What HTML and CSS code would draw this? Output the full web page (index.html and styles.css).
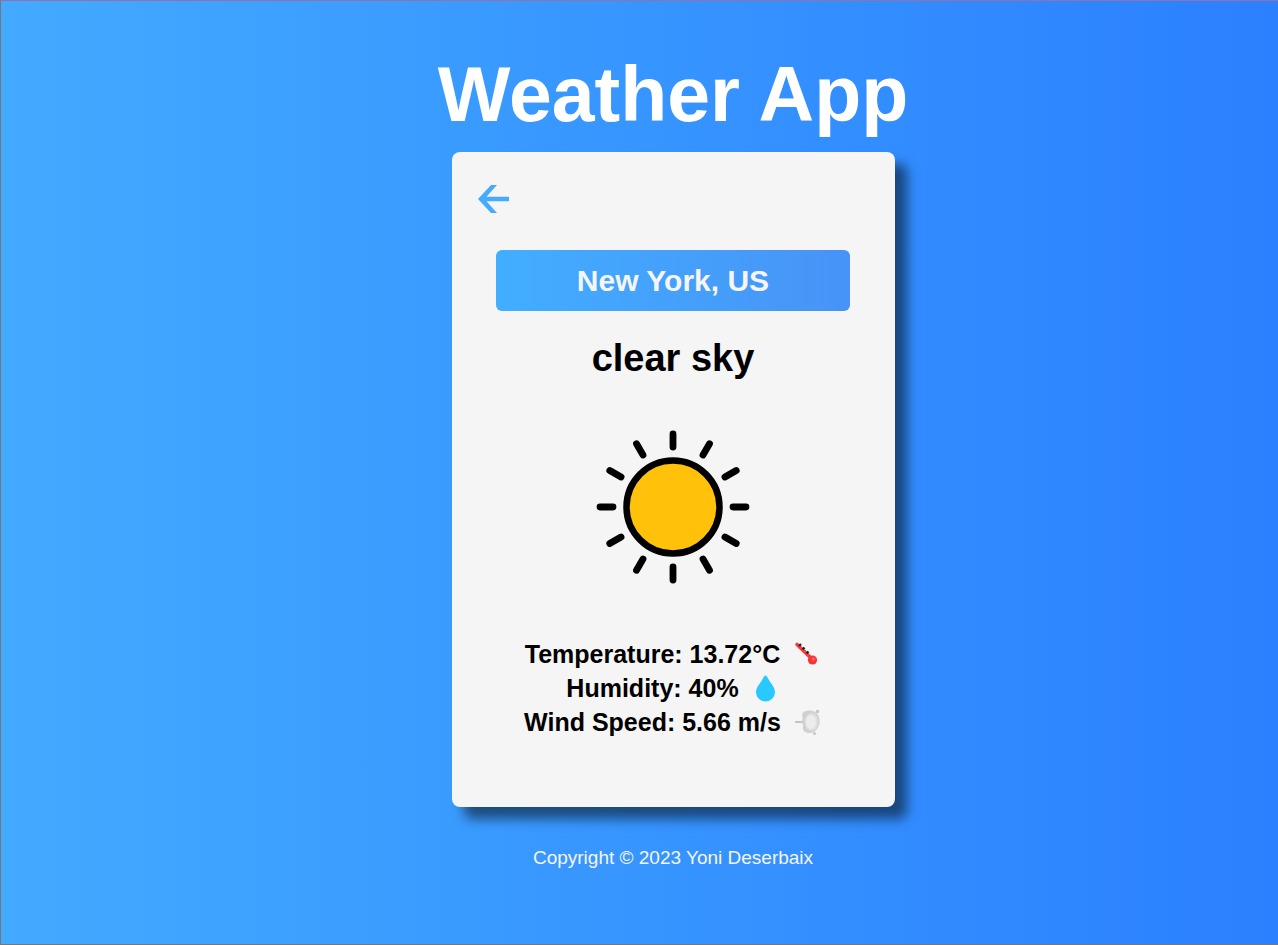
FILE: index.html
```html
<!DOCTYPE html>
<html lang="en">
<head>
<meta charset="utf-8">
<meta name="viewport" content="width=device-width, initial-scale=1">
<title>Weather App</title>
<link rel="stylesheet" href="styles.css">
</head>
<body>
<div class="app">
  <h1 class="title">Weather App</h1>
  <main class="card">
    <button class="back" type="button" aria-label="Back">
      <svg width="32" height="28" viewBox="0 0 32 28" aria-hidden="true"><path d="M0 14 13 0h6L8.500 11.700H31v4.600H8.500L19 28h-6z" fill="#45abff"/></svg>
    </button>
    <h2 class="city">New York, US</h2>
    <p class="condition">clear sky</p>
    <svg class="sun" viewBox="-80 -80 160 160" role="img" aria-label="Sun">
      <circle r="46.500" fill="#ffc10a" stroke="#000" stroke-width="6.500"/>
      <g stroke="#000" stroke-width="6.800" stroke-linecap="round">
        <path id="ray" d="M0-60V-73"/>
        <use href="#ray" transform="rotate(30)"/>
        <use href="#ray" transform="rotate(60)"/>
        <use href="#ray" transform="rotate(90)"/>
        <use href="#ray" transform="rotate(120)"/>
        <use href="#ray" transform="rotate(150)"/>
        <use href="#ray" transform="rotate(180)"/>
        <use href="#ray" transform="rotate(210)"/>
        <use href="#ray" transform="rotate(240)"/>
        <use href="#ray" transform="rotate(270)"/>
        <use href="#ray" transform="rotate(300)"/>
        <use href="#ray" transform="rotate(330)"/>
      </g>
    </svg>
    <ul class="details">
      <li class="detail">Temperature: 13.72°C
        <svg class="icon" viewBox="0 0 28 28" aria-hidden="true">
          <path d="M4 4.500 17 17" stroke="#fb3b38" stroke-width="3.600" stroke-linecap="round"/>
          <circle cx="19.500" cy="20" r="4.600" fill="#fb3333"/>
          <circle cx="20.500" cy="19" r="1.800" fill="#ff6868"/>
          <path d="m6 6 2-2M9.500 9.500l2-2M13.500 13.500l2-2" stroke="#252525" stroke-width="2.400"/>
        </svg>
      </li>
      <li class="detail">Humidity: 40%
        <svg class="icon" viewBox="0 0 28 28" aria-hidden="true"><path d="M13.500 1.500c1 0 1.500 1 2 2 2.500 5 7.500 9.500 7.500 14.500a9.500 9.500 0 0 1-19 0c0-5 5-9.500 7.500-14.500.5-1 1-2 2-2z" fill="#27c9ff"/></svg>
      </li>
      <li class="detail">Wind Speed: 5.66 m/s
        <svg class="icon" viewBox="0 0 28 28" aria-hidden="true">
          <path d="M1 14h9" stroke="#c5c5c5" stroke-width="2"/>
          <path d="M9 4.500C12 1 24 1 25.500 11c1 7-3 13-9 14-3 .5-7-1-7.500-4-.5-2 1-3-.5-5-1-1.500-1-3 0-4.500S7 6.500 9 4.500z" fill="#d0d0d0"/>
          <ellipse cx="17.500" cy="14" rx="7" ry="9" fill="#dedede"/>
          <ellipse cx="17" cy="14" rx="5" ry="7" fill="#ececec"/>
          <circle cx="23.500" cy="3.500" r="1.800" fill="#c6c6c6"/>
          <circle cx="20.500" cy="25.500" r="1.500" fill="#c6c6c6"/>
        </svg>
      </li>
    </ul>
  </main>
  <footer class="footer">Copyright © 2023 Yoni Deserbaix</footer>
</div>
</body>
</html>
```
FILE: styles.css
```css
* {
  box-sizing: border-box;
}

body {
  margin: 0;
  min-height: 100vh;
  border: 1px solid #77777a;
  border-top-color: #9670aa;
  border-right: 0;
  background: linear-gradient(to right, #42aaff, #2b80ff);
  font-family: "Liberation Sans", Arial, sans-serif;
  color: #000;
}

.app {
  display: flex;
  flex-direction: column;
  align-items: center;
  padding: 49px 0 48px 67px;
}

.title {
  margin: 0;
  font-size: 77px;
  line-height: 88px;
  color: #fff;
}

.card {
  display: flex;
  flex-direction: column;
  align-items: center;
  width: 100%;
  max-width: 443px;
  margin-top: 14px;
  padding: 33px 26px 68px;
  border-radius: 8px;
  background: #f5f5f5;
  box-shadow: 12px 12px 12px rgba(0, 0, 0, 0.5);
}

.back {
  display: flex;
  align-self: flex-start;
  padding: 0;
  border: 0;
  background: none;
  cursor: pointer;
}

.city {
  width: 100%;
  max-width: 354px;
  margin: 37px 0 0;
  border-radius: 6px;
  background: linear-gradient(to right, #42aeff, #4793f7);
  font-size: 30px;
  line-height: 61px;
  text-align: center;
  color: #f5f5f5;
}

.condition {
  margin: 25px 0 0;
  font-size: 38px;
  font-weight: bold;
  line-height: 44px;
}

.sun {
  width: 160px;
  height: 160px;
  margin-top: 47px;
}

.details {
  margin: 50px 0 0;
  padding: 0;
  list-style: none;
  font-size: 25px;
  font-weight: bold;
  line-height: 34px;
}

.detail {
  display: flex;
  align-items: center;
  justify-content: center;
  gap: 13px;
}

.icon {
  width: 28px;
  height: 28px;
  fill: none;
}

.footer {
  margin-top: 39px;
  font-size: 19px;
  line-height: 24px;
  color: #f5f5f5;
}
```
